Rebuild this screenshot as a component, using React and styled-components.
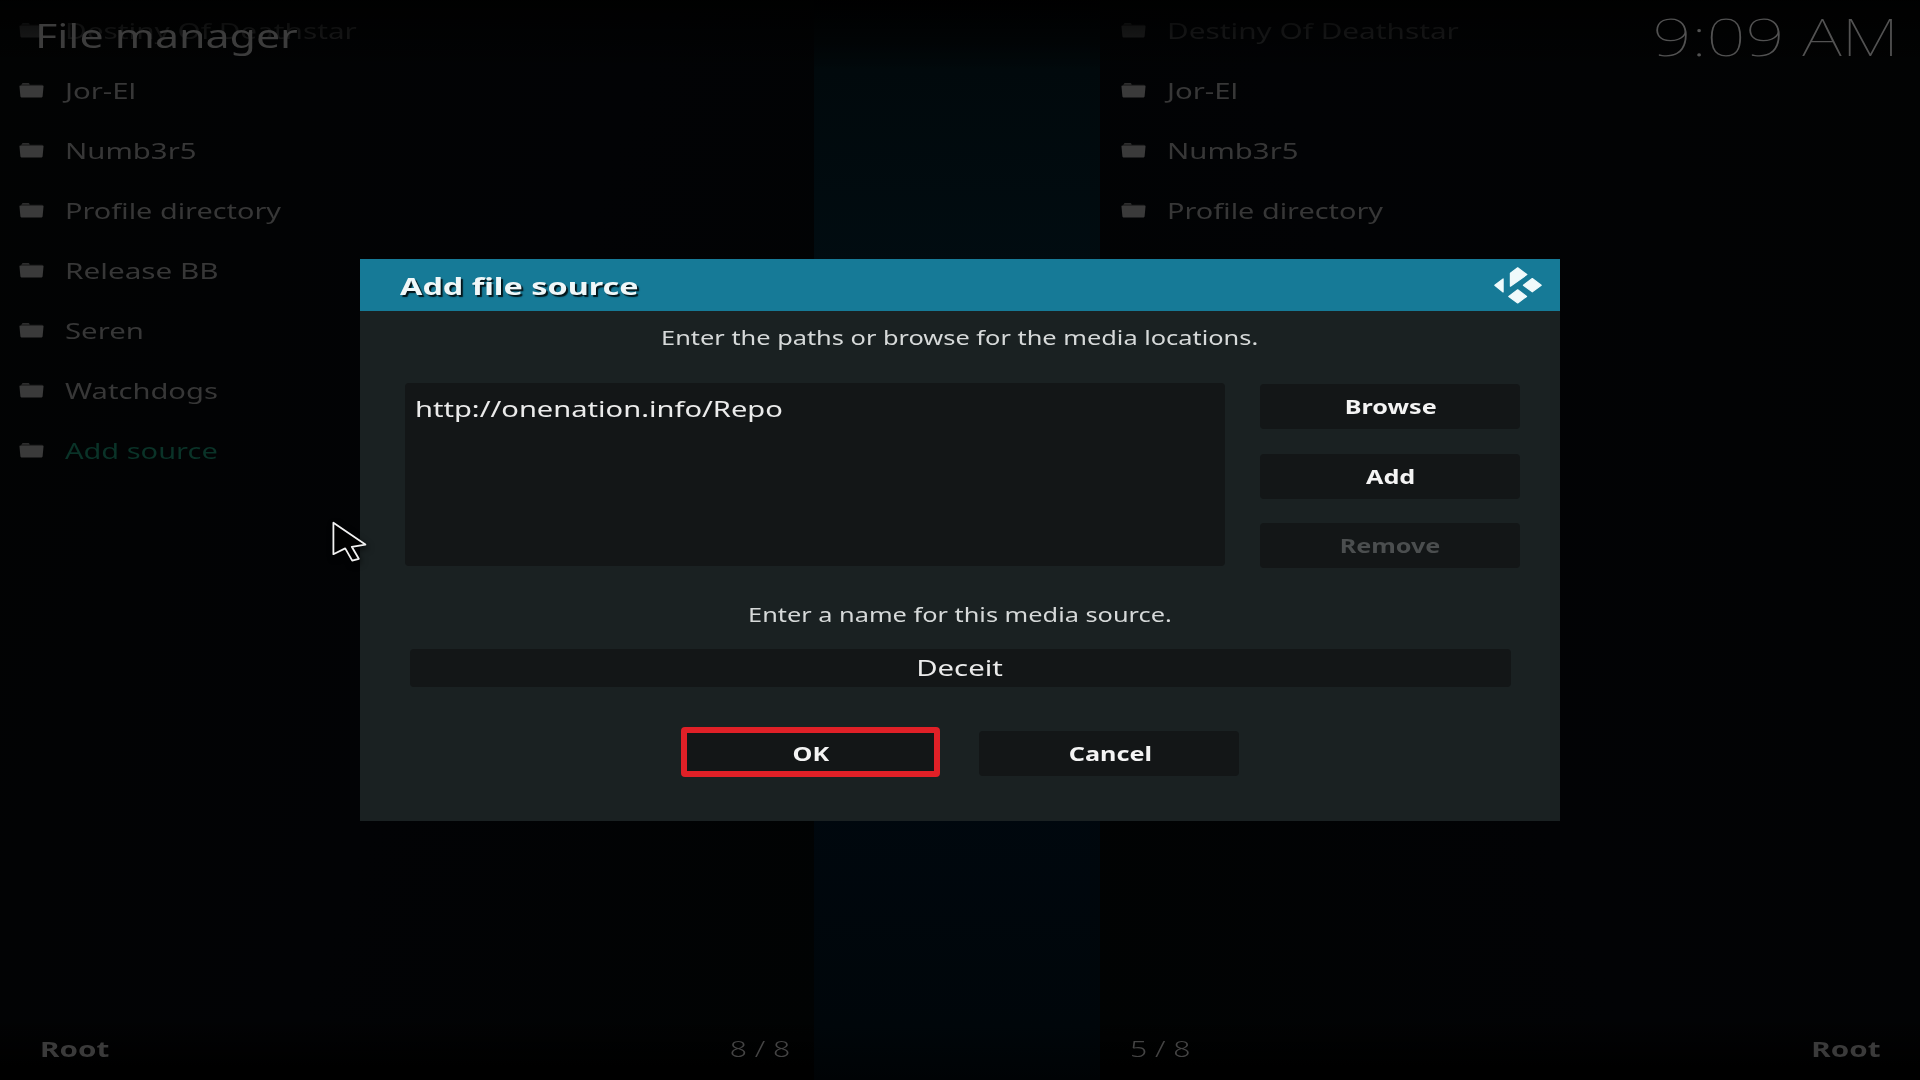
import React from "react";
import styled, { createGlobalStyle } from "styled-components";

const GlobalStyle = createGlobalStyle`
  *, *::before, *::after { box-sizing: border-box; }
  body {
    margin: 0;
    background: #000;
    overflow: hidden;
    font-family: "Noto Sans", "Open Sans", sans-serif;
  }
`;

const Screen = styled.div`
  position: relative;
  display: grid;
  grid-template-columns: 814px 286px 820px;
  width: 1920px;
  height: 1080px;
  overflow: hidden;
  background: #010203;
`;

/* The 4:3 skin is shown on a 16:9 screen, so all lettering is widened. */
const Wide = styled.span`
  display: inline-block;
  white-space: pre;
  transform: scaleX(${(p) => p.$by || 1.325});
  transform-origin: ${(p) => p.$from || "left"} center;
`;

const Pane = styled.section`
  display: flex;
  flex-direction: column;
  background: linear-gradient(
    ${(p) => (p.$flip ? "250deg" : "110deg")},
    #020303 0%,
    #020304 28%,
    #020305 55%,
    #010303 100%
  );
`;

const Band = styled.div`
  background: linear-gradient(#010203 0, #01090c 70px, #010c11 25%, #00080f 70%, #00060a 95%, #000305 100%);
`;

const List = styled.ul`
  flex: 1;
  margin: 0;
  padding: 0;
  list-style: none;
`;

const Row = styled.li`
  display: flex;
  align-items: center;
  gap: ${(p) => (p.$right ? 21 : 20.6)}px;
  height: 60px;
  padding-left: ${(p) => (p.$right ? 21 : 19)}px;
  font-size: 22px;
  line-height: 59px;
  color: ${(p) => (p.$accent ? "#0a3328" : "#373737")};
  opacity: ${(p) => (p.$faded ? 0.62 : 1)};
`;

const FolderGlyph = styled.svg`
  width: 25px;
  height: 15px;
  flex: none;
`;

const PaneFooter = styled.footer`
  display: flex;
  flex-direction: ${(p) => (p.$flip ? "row-reverse" : "row")};
  justify-content: space-between;
  align-items: center;
  height: 63px;
  padding: ${(p) => (p.$flip ? "0 40px 2px 30px" : "0 24px 2px 40px")};
  font-size: 22px;
  color: #393939;
  background: linear-gradient(transparent, #000 80%);
`;

const Folder = styled.strong`
  font-weight: 700;
  color: #3a3a3a;
`;

const Counter = styled.span`
  font-weight: 300;
  color: #444;
`;

const TopBar = styled.header`
  position: absolute;
  inset: 0 0 auto 0;
  display: flex;
  justify-content: space-between;
  height: 72px;
  padding: 0 21px 0 35px;
  line-height: 72px;
  background: linear-gradient(rgba(0, 0, 0, 0.85), rgba(0, 0, 0, 0.2) 75%, transparent);
`;

const Heading = styled.h1`
  margin: 0;
  font-size: 32.2px;
  font-weight: 400;
  color: #3c3c3c;
`;

const Clock = styled.time`
  font-size: 51.3px;
  font-weight: 100;
  color: #525252;
`;

const Overlay = styled.div`
  position: absolute;
  inset: 0;
  display: grid;
  place-items: center;
`;

const Dialog = styled.section`
  display: flex;
  flex-direction: column;
  width: 1200px;
  height: 562px;
  background: #1a2122;
`;

const TitleBar = styled.header`
  display: flex;
  align-items: center;
  justify-content: space-between;
  height: 52px;
  padding: 1px 18px 0 39.5px;
  background: #167a97;
`;

const Title = styled.h2`
  margin: 0;
  font-size: 24px;
  line-height: 50px;
  font-weight: 700;
  color: #f0f7f8;
  text-shadow: 1.5px 2px 1px rgba(0, 0, 0, 0.85);
`;

const KodiMark = styled.svg`
  width: 48px;
  height: 37px;
`;

const Hint = styled.p`
  margin: 0;
  text-align: center;
  font-size: 19px;
  height: ${(p) => p.$height}px;
  line-height: ${(p) => p.$height + 2}px;
  color: #d6d9d9;
`;

const Sources = styled.div`
  display: flex;
  justify-content: space-between;
  margin-top: 20px;
  padding: 0 40px 0 45px;
`;

const PathList = styled.div`
  width: 820px;
  height: 183px;
  padding-left: 10px;
  border-radius: 4px;
  background: #131617;
`;

const Path = styled.div`
  font-size: 22px;
  line-height: 51px;
  color: #ebebeb;
`;

const SideButtons = styled.div`
  display: flex;
  flex-direction: column;
  gap: 24.5px;
  padding-top: 1px;
`;

const Button = styled.button`
  display: flex;
  align-items: center;
  justify-content: center;
  width: 260px;
  height: 45px;
  padding: 2px 0 0 1px;
  border: 0;
  border-radius: 4px;
  background: #131617;
  font: 700 19px/43px "Noto Sans", "Open Sans", sans-serif;
  color: ${(p) => (p.disabled ? "#4b4e4f" : "#f4f4f4")};
`;

const OkButton = styled(Button)`
  width: 259px;
  height: 50px;
  padding: 4px 0 0;
  border: 6px solid #e02027;
  line-height: 34px;
`;

const NameField = styled.div`
  align-self: center;
  width: 1101px;
  height: 38px;
  margin-top: 14px;
  border-radius: 4px;
  background: #131617;
  text-align: center;
  font-size: 22px;
  line-height: 37px;
  color: #ebebeb;
`;

const Actions = styled.div`
  display: flex;
  align-items: flex-end;
  gap: 39px;
  margin-top: 40px;
  padding-left: 321px;
  ${Button}:last-child {
    margin-bottom: 1px;
    padding-left: 3px;
  }
`;

const NameHint = styled(Hint)`
  margin-top: 26px;
`;

const Cursor = styled.svg`
  position: absolute;
  left: 328px;
  top: 518px;
  width: 44px;
  height: 50px;
  filter: drop-shadow(2px 3px 3px rgba(0, 0, 0, 0.6));
`;

function FolderIcon() {
  return (
    <FolderGlyph viewBox="0 0 25 15">
      <path d="M3.5 0.3h6.6l.8 1.4H23a1 1 0 0 1 1 1V5H1V3z" fill="#202020" />
      <path d="M3.6 0.2h6.2l.5 1H2.9z" fill="#353535" />
      <path d="M.4 2.8h24.2L23.6 13.6a.9.9 0 0 1-.9.8H2.3a.9.9 0 0 1-.9-.8z" fill="#3a3a3a" />
    </FolderGlyph>
  );
}

function Logo() {
  return (
    <KodiMark viewBox="0 0 48 37" fill="#f0fafb" stroke="#f0fafb" strokeWidth="1.2" strokeLinejoin="round">
      <path d="M.8 18.3 9.1 11.9V25z" />
      <path d="M16.4 6.2 23.7.8 32.8 7.6 16.4 19.2z" />
      <path d="M38.3 11.6 47.2 18.3 38.3 24.8 29.4 18.3z" />
      <path d="M23.7 22.8 32.6 29.4 23.7 36 14.8 29.4z" />
    </KodiMark>
  );
}

const FOLDERS = [
  { name: "Destiny Of Deathstar", stretch: 1.352 },
  { name: "Jor-El", stretch: 1.333 },
  { name: "Numb3r5", stretch: 1.333 },
  { name: "Profile directory", stretch: 1.312 },
  { name: "Release BB", stretch: 1.35 },
  { name: "Seren", stretch: 1.333 },
  { name: "Watchdogs", stretch: 1.325 },
  { name: "Add source", stretch: 1.318, accent: true },
];

function FilePane({ items, count, right }) {
  return (
    <Pane $flip={right}>
      <List>
        {items.map(({ name, stretch, accent }, i) => (
          <Row key={name} $right={right} $faded={i === 0} $accent={accent}>
            <FolderIcon />
            <Wide $by={stretch}>{name}</Wide>
          </Row>
        ))}
      </List>
      <PaneFooter $flip={right}>
        <Folder><Wide $by={1.345} $from={right ? "right" : "left"}>Root</Wide></Folder>
        <Counter><Wide $by={1.37} $from={right ? "left" : "right"}>{count}</Wide></Counter>
      </PaneFooter>
    </Pane>
  );
}

export default function App() {
  return (
    <>
      <GlobalStyle />
      <Screen>
        <FilePane items={FOLDERS} count="8 / 8" />
        <Band />
        <FilePane items={FOLDERS.slice(0, 4)} count="5 / 8" right />
        <TopBar>
          <Heading><Wide $by={1.333}>File manager</Wide></Heading>
          <Clock><Wide $by={1.333} $from="right">9:09 AM</Wide></Clock>
        </TopBar>
        <Overlay>
          <Dialog>
            <TitleBar>
              <Title><Wide $by={1.348}>Add file source</Wide></Title>
              <Logo />
            </TitleBar>
            <Hint $height={52}><Wide $by={1.335} $from="center">Enter the paths or browse for the media locations.</Wide></Hint>
            <Sources>
              <PathList>
                <Path><Wide $by={1.322}>http://onenation.info/Repo</Wide></Path>
              </PathList>
              <SideButtons>
                <Button><Wide $from="center">Browse</Wide></Button>
                <Button><Wide $from="center">Add</Wide></Button>
                <Button disabled><Wide $from="center">Remove</Wide></Button>
              </SideButtons>
            </Sources>
            <NameHint $height={41}><Wide $by={1.333} $from="center">Enter a name for this media source.</Wide></NameHint>
            <NameField><Wide $by={1.333} $from="center">Deceit</Wide></NameField>
            <Actions>
              <OkButton><Wide $from="center">OK</Wide></OkButton>
              <Button><Wide $from="center">Cancel</Wide></Button>
            </Actions>
          </Dialog>
        </Overlay>
        <Cursor viewBox="0 0 44 50">
          <path
            d="M5.4 4.8V36.2L17.2 30.4 24.2 42.6 30.8 40.8 23.8 28.8 37.4 26.6z"
            fill="#000"
            stroke="#f2f2f2"
            strokeWidth="1.8"
            strokeLinejoin="round"
          />
        </Cursor>
      </Screen>
    </>
  );
}
